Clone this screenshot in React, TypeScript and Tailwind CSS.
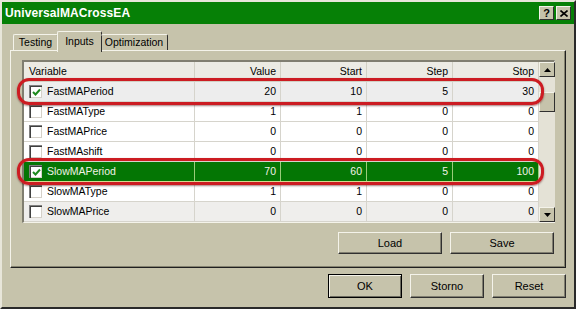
import React from 'react';

type Row = { name: string; checked: boolean; values: [number, number, number, number] };

const rows: Row[] = [
  { name: 'FastMAPeriod', checked: true, values: [20, 10, 5, 30] },
  { name: 'FastMAType', checked: false, values: [1, 1, 0, 0] },
  { name: 'FastMAPrice', checked: false, values: [0, 0, 0, 0] },
  { name: 'FastMAshift', checked: false, values: [0, 0, 0, 0] },
  { name: 'SlowMAPeriod', checked: true, values: [70, 60, 5, 100] },
  { name: 'SlowMAType', checked: false, values: [1, 1, 0, 0] },
  { name: 'SlowMAPrice', checked: false, values: [0, 0, 0, 0] },
];

const font = { fontFamily: '"Liberation Sans", Arial, sans-serif' };

const Checkbox: React.FC<{ checked: boolean }> = ({ checked }) => (
  <span className="w-[13px] h-[13px] shrink-0 bg-white border-t border-l border-[#808080] shadow-[inset_1px_1px_0_#404040,inset_-1px_-1px_0_#d4d0c8] flex items-center justify-center">
    {checked && (
      <svg width="9" height="9" viewBox="0 0 9 9">
        <path d="M1 4 L3.5 6.5 L8 1.5" fill="none" stroke="#1e8a1e" strokeWidth="2" />
      </svg>
    )}
  </span>
);

const Btn: React.FC<{ label: string; w: string; h: string; isDefault?: boolean }> = ({ label, w, h, isDefault }) => (
  <div
    className={`${w} ${h} bg-[#c6c3ab] flex items-center justify-center text-[11px] text-black ${
      isDefault
        ? 'border border-black shadow-[inset_1px_1px_0_#f4f3ea,inset_-1px_-1px_0_#6b6a5e]'
        : 'border-t border-l border-[#f4f3ea] border-r border-b border-r-[#303030] border-b-[#303030] shadow-[inset_-1px_-1px_0_#807e70]'
    }`}
  >
    {label}
  </div>
);

const ArrowBtn: React.FC<{ up?: boolean }> = ({ up }) => (
  <div className="w-[16px] h-[15px] bg-[#c6c3ab] border-t border-l border-[#f4f3ea] border-r border-b border-r-[#303030] border-b-[#303030] flex items-center justify-center">
    <svg width="7" height="4" viewBox="0 0 7 4">
      <path d={up ? 'M0 4 L3.5 0 L7 4 Z' : 'M0 0 L3.5 4 L7 0 Z'} fill="#000" />
    </svg>
  </div>
);

export default function App() {
  return (
    <div style={font} className="w-[576px] h-[309px] bg-[#c6c3ab] border-2 border-t-[#e8e6da] border-l-[#e8e6da] border-r-[#2a2a2a] border-b-[#2a2a2a] flex flex-col overflow-hidden select-none">
      {/* title bar */}
      <div className="h-[22px] bg-[#068006] flex items-center justify-between pl-[3px] pr-[3px]">
        <span className="text-white font-bold text-[12px] tracking-[0.1px]">UniversalMACrossEA</span>
        <div className="flex gap-[2px]">
          <div className="w-[15px] h-[14px] bg-[#c6c3ab] border-t border-l border-[#f4f3ea] border-r border-b border-r-[#303030] border-b-[#303030] flex items-center justify-center text-[11px] font-bold leading-none text-black">?</div>
          <div className="w-[15px] h-[14px] bg-[#c6c3ab] border-t border-l border-[#f4f3ea] border-r border-b border-r-[#303030] border-b-[#303030] flex items-center justify-center">
            <svg width="8" height="7" viewBox="0 0 8 7">
              <path d="M0.5 0.5 L7.5 6.5 M7.5 0.5 L0.5 6.5" stroke="#000" strokeWidth="1.6" />
            </svg>
          </div>
        </div>
      </div>

      <div className="flex flex-col px-[8px]">
        {/* tabs */}
        <div className="h-[28px] -mb-[2px] flex items-start pl-[3px] relative z-10 text-[10.5px] text-black">
          <div className="mt-[10px] h-[16px] w-[45px] border-t border-l border-[#f4f3ea] border-r border-r-[#303030] rounded-t-[2px] flex items-center justify-center">Testing</div>
          <div className="mt-[7px] h-[21px] w-[45px] -mx-[1px] bg-[#c6c3ab] border-t border-l border-[#f4f3ea] border-r border-r-[#303030] rounded-t-[2px] flex items-start justify-center pt-[2px]">Inputs</div>
          <div className="mt-[10px] h-[16px] w-[67px] border-t border-[#f4f3ea] border-r border-r-[#303030] rounded-t-[2px] flex items-center justify-center">Optimization</div>
        </div>

        {/* panel */}
        <div className="h-[218px] w-[556px] border-t border-l border-[#f4f3ea] border-r border-b border-r-[#202020] border-b-[#202020] shadow-[inset_-1px_-1px_0_#858370] flex flex-col">
          {/* list */}
          <div className="ml-[11px] mt-[9px] w-[533px] h-[163px] border-t-2 border-l-2 border-t-[#807e70] border-l-[#807e70] border-r border-b border-r-[#f4f3ea] border-b-[#f4f3ea] bg-white flex text-[10.5px] text-black">
            <div className="w-[515px] flex flex-col">
              <div className="h-[20px] flex bg-[#ecebe4] border-b border-[#d2d0c4]">
                <div className="w-[171px] pl-[5px] flex items-center border-r border-[#d2d0c4]">Variable</div>
                {['Value', 'Start', 'Step', 'Stop'].map(h => (
                  <div key={h} className="w-[86px] pr-[4px] flex items-center justify-end border-r border-[#d2d0c4]">{h}</div>
                ))}
              </div>
              {rows.map((r, i) => {
                const green = r.name === 'SlowMAPeriod';
                const outlined = r.checked;
                const bg = green ? 'bg-[#047604] text-[#f2f2e6]' : i === 0 ? 'bg-[#ededed]' : i === 6 ? 'bg-[#efeeec]' : 'bg-white';
                const line = green ? 'border-[#9acc7a]' : 'border-[#d6d4cc]';
                return (
                  <div key={r.name} className={`relative h-[20px] flex ${bg} border-b ${green ? 'border-b-[#d8d890]' : 'border-b-[#d6d4cc]'}`}>
                    <div className={`w-[171px] pl-[5px] flex items-center gap-[5px] border-r ${line}`}>
                      <Checkbox checked={r.checked} />
                      <span>{r.name}</span>
                    </div>
                    {r.values.map((v, j) => (
                      <div key={j} className={`w-[86px] pr-[4px] flex items-center justify-end border-r ${line}`}>{v}</div>
                    ))}
                    {outlined && (
                      <span className="absolute -left-[7px] -right-[5px] -top-[4px] -bottom-[4px] z-20 border-[3px] border-[#cc1c22] rounded-[12px] shadow-[0_1px_2px_rgba(80,0,0,0.5)] pointer-events-none" />
                    )}
                  </div>
                );
              })}
            </div>
            {/* scrollbar */}
            <div className="w-[16px] flex flex-col bg-[#e4e2d6]">
              <ArrowBtn up />
              <div className="flex-1 flex flex-col">
                <div className="h-[15px]" />
                <div className="h-[20px] bg-[#c6c3ab] border-t border-l border-[#f4f3ea] border-r border-b border-r-[#303030] border-b-[#303030]" />
              </div>
              <ArrowBtn />
            </div>
          </div>

          {/* load / save */}
          <div className="mt-[9px] pr-[11px] flex justify-end gap-[8px]">
            <Btn label="Load" w="w-[104px]" h="h-[22px]" />
            <Btn label="Save" w="w-[104px]" h="h-[22px]" />
          </div>
        </div>

        {/* bottom buttons */}
        <div className="mt-[6px] flex justify-end gap-[8px]">
          <Btn label="OK" w="w-[74px]" h="h-[24px]" isDefault />
          <Btn label="Storno" w="w-[74px]" h="h-[24px]" />
          <Btn label="Reset" w="w-[74px]" h="h-[24px]" />
        </div>
      </div>
    </div>
  );
}
